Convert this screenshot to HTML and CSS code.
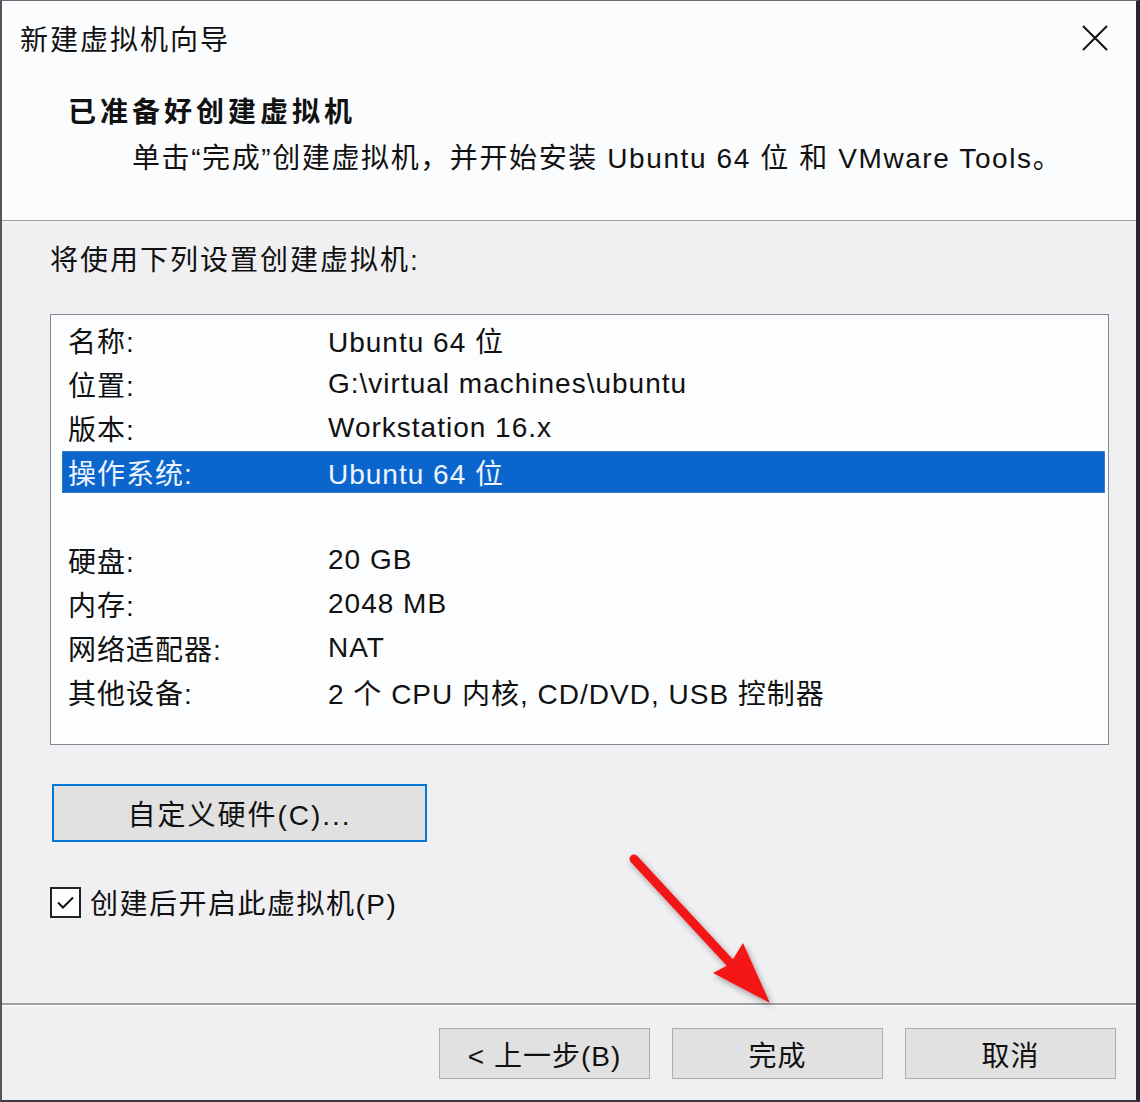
FILE: index.html
```html
<!DOCTYPE html>
<html lang="zh-CN">
<head>
    <meta charset="UTF-8">
    <title>新建虚拟机向导</title>
    <link rel="stylesheet" href="styles.css">
</head>
<body>
    <div class="dialog" role="dialog" aria-labelledby="wizardTitle">
        <div class="header">
            <div class="title-bar">
                <span class="title-text" id="wizardTitle">新建虚拟机向导</span>
                <button class="close-btn" aria-label="关闭">
                    <svg width="26" height="26" viewBox="0 0 26 26">
                        <path d="M1 1 L25 25 M25 1 L1 25" stroke="#111" stroke-width="2" fill="none"/>
                    </svg>
                </button>
            </div>
            <h1 class="page-title">已准备好创建虚拟机</h1>
            <p class="page-desc">单击“完成”创建虚拟机，并开始安装 Ubuntu 64 位 和 VMware Tools。</p>
        </div>

        <div class="content">
            <p class="summary-label">将使用下列设置创建虚拟机:</p>

            <div class="summary-list" role="listbox">
                <div class="row"><span class="key">名称:</span><span class="val">Ubuntu 64 位</span></div>
                <div class="row"><span class="key">位置:</span><span class="val">G:\virtual machines\ubuntu</span></div>
                <div class="row"><span class="key">版本:</span><span class="val">Workstation 16.x</span></div>
                <div class="row selected"><span class="key">操作系统:</span><span class="val">Ubuntu 64 位</span></div>
                <div class="row"></div>
                <div class="row"><span class="key">硬盘:</span><span class="val">20 GB</span></div>
                <div class="row"><span class="key">内存:</span><span class="val">2048 MB</span></div>
                <div class="row"><span class="key">网络适配器:</span><span class="val">NAT</span></div>
                <div class="row"><span class="key">其他设备:</span><span class="val">2 个 CPU 内核, CD/DVD, USB 控制器</span></div>
            </div>

            <button class="button custom-hw">自定义硬件(C)...</button>

            <label class="check-row">
                <span class="checkbox">
                    <svg width="23" height="23" viewBox="0 0 23 23">
                        <path d="M4 11.5 L9 16.5 L19 6.5" stroke="#111" stroke-width="2" fill="none"/>
                    </svg>
                </span>
                <span>创建后开启此虚拟机(P)</span>
            </label>
        </div>

        <div class="footer">
            <button class="button nav-btn">&lt; 上一步(B)</button>
            <button class="button nav-btn">完成</button>
            <button class="button nav-btn">取消</button>
        </div>

        <!-- red pointer to the finish button -->
        <svg class="pointer" width="1140" height="1102" viewBox="0 0 1140 1102">
            <defs>
                <filter id="arrowShadow" x="-20%" y="-20%" width="140%" height="140%">
                    <feDropShadow dx="2" dy="3" stdDeviation="3" flood-color="#000" flood-opacity="0.35"/>
                </filter>
            </defs>
            <g filter="url(#arrowShadow)" fill="#f41414">
                <path d="M634 859 L733 966" stroke="#f41414" stroke-width="9" stroke-linecap="round"/>
                <path d="M743 943 L770 1003 L713 973 L730 964 Z"/>
            </g>
        </svg>
    </div>
</body>
</html>
```

FILE: styles.css
```css
/* Windows 10 wizard dialog, 200% scale */
:root {
    --dlg-bg: #f0f0f2;
    --dlg-header: #fbfcfe;
    --dlg-line: #a0a0a0;
    --btn-bg: #e1e1e1;
    --btn-border: #adadad;
    --focus-blue: #0078d7;
    --select-blue: #0a66cc;
    --text: #111;
}

* {
    box-sizing: border-box;
}

body {
    margin: 0;
    font-family: "Liberation Sans", "Noto Sans CJK SC", sans-serif;
    font-size: 28px;
    color: var(--text);
    background: var(--dlg-bg);
}

.dialog {
    position: relative;
    width: 1140px;
    height: 1102px;
    background: var(--dlg-bg);
    border-top: 1px solid #6a6a70;
    border-left: 2px solid #55555c;
    border-right: 4px solid #2a2530;
    border-bottom: 2px solid #3a3a40;
    display: flex;
    flex-direction: column;
}

.header {
    background: var(--dlg-header);
    height: 220px;
    border-bottom: 1px solid var(--dlg-line);
    flex-shrink: 0;
}

.title-bar {
    display: flex;
    justify-content: space-between;
    align-items: center;
    height: 40px;
    margin-top: 17px;
    padding: 0 28px 0 18px;
}

.title-text {
    font-size: 28px;
    letter-spacing: 2px;
}

.close-btn {
    background: none;
    border: none;
    padding: 0;
    width: 26px;
    height: 26px;
    display: flex;
}

.page-title {
    margin: 35px 0 0 66px;
    font-size: 28px;
    font-weight: bold;
    line-height: 40px;
    letter-spacing: 4px;
}

.page-desc {
    margin: 6px 0 0 130px;
    line-height: 40px;
    letter-spacing: 1.6px;
}

.content {
    height: 784px;
    padding: 20px 27px 0 48px;
    border-bottom: 2px solid var(--dlg-line);
    flex-shrink: 0;
}

.summary-label {
    margin: 0 0 33px 0;
    line-height: 40px;
    letter-spacing: 2px;
}

.summary-list {
    height: 431px;
    background: #fcfdfe;
    border: 1px solid #828790;
    padding: 4px 3px 0 11px;
    display: flex;
    flex-direction: column;
    gap: 2px;
}

.row {
    display: flex;
    align-items: center;
    height: 42px;
    padding-left: 6px;
}

.row .key {
    width: 260px;
    letter-spacing: 1px;
}

.row .val {
    letter-spacing: 1px;
}

.row.selected {
    background: var(--select-blue);
    color: #eef4ff;
    outline: 1px dotted #6d8fc0;
    outline-offset: -1px;
}

.button {
    font: inherit;
    color: var(--text);
    background: var(--btn-bg);
    border: 1px solid var(--btn-border);
    padding: 0;
    cursor: pointer;
    letter-spacing: 1px;
}

.custom-hw {
    display: block;
    width: 375px;
    height: 58px;
    margin: 39px 0 0 2px;
    border: 2px solid var(--focus-blue);
    letter-spacing: 2px;
}

.check-row {
    display: flex;
    align-items: center;
    gap: 9px;
    margin-top: 40px;
    letter-spacing: 1.5px;
}

.checkbox {
    width: 31px;
    height: 31px;
    border: 2px solid #222;
    background: #fff;
    display: flex;
    align-items: center;
    justify-content: center;
}

.footer {
    flex: 1;
    display: flex;
    justify-content: flex-end;
    gap: 22px;
    padding: 22px 20px 0 0;
    border-top: 1px solid #fff;
}

.nav-btn {
    width: 211px;
    height: 51px;
}

.pointer {
    position: absolute;
    top: -1px;
    left: -2px;
    pointer-events: none;
}
```
